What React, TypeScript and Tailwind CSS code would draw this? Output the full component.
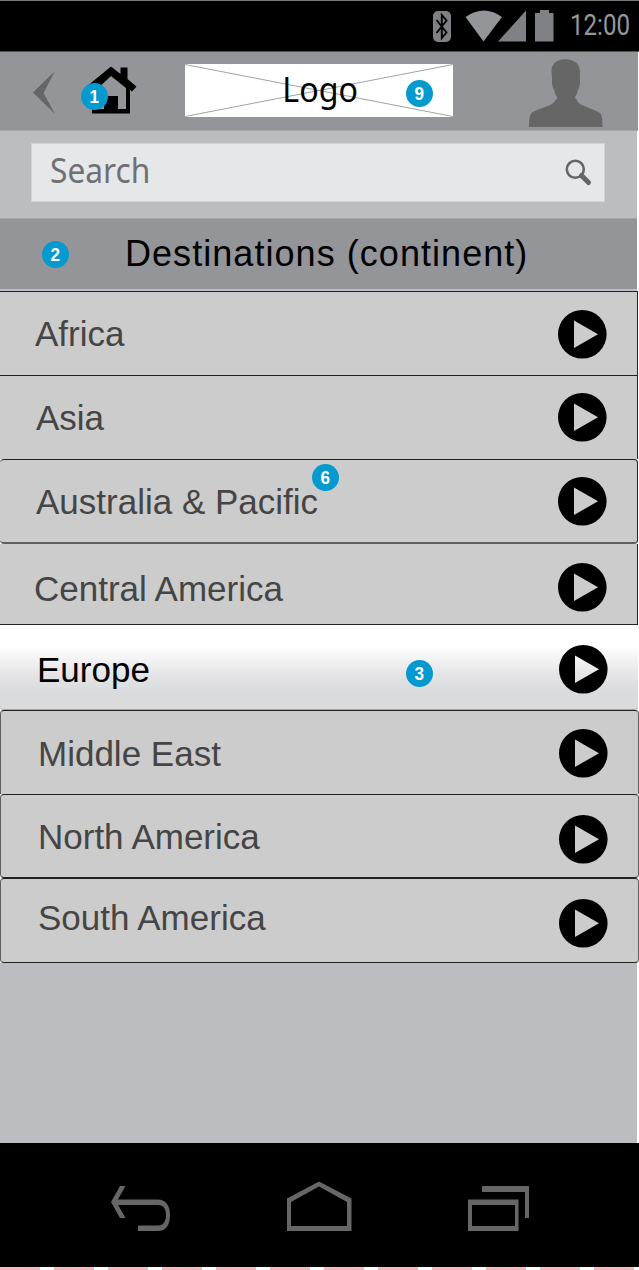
import React from "react";

type Row = {
  name: string;
  frame: string;
  label: string;
  arrow: string;
  badge?: { value: string; place: string };
};

const rows: Row[] = [
  { name: "Africa", frame: "h-[84px] w-[638px] border-t border-r bg-[#cccccc]", label: "mt-[24px] ml-[35px] text-[#454545]", arrow: "mt-[18px] ml-[558px]" },
  { name: "Asia", frame: "h-[84px] w-[638px] border-t border-r bg-[#cccccc]", label: "mt-[24px] ml-[36px] text-[#454545]", arrow: "mt-[17px] ml-[558px]" },
  { name: "Australia & Pacific", frame: "h-[85px] w-[638px] rounded-[4px] border-t border-r border-b-2 border-b-[#606060] bg-[#cccccc]", label: "mt-[24px] ml-[36px] text-[#454545]", arrow: "mt-[17px] ml-[558px]", badge: { value: "6", place: "left-[312px] top-[4px]" } },
  { name: "Central America", frame: "h-[81px] w-[638px] border-r border-b bg-[#cccccc]", label: "mt-[27px] ml-[34px] text-[#454545]", arrow: "mt-[19px] ml-[558px]" },
  { name: "Europe", frame: "h-[85px] w-[638px] rounded-[4px] border-b border-b-[#a0a0a0] bg-linear-to-b from-white from-25% via-[#e4e4e6] via-60% to-[#dadbdd] to-80%", label: "mt-[27px] ml-[37px] text-black", arrow: "mt-[20px] ml-[559px]", badge: { value: "3", place: "left-[406px] top-[35px]" } },
  { name: "Middle East", frame: "h-[84px] w-[639px] rounded-t-[4px] border-x border-t border-x-[#606060] bg-[#cccccc]", label: "mt-[25px] ml-[37px] text-[#454545]", arrow: "mt-[18px] ml-[558px]" },
  { name: "North America", frame: "h-[84px] w-[639px] rounded-[4px] border border-x-[#606060] bg-[#cccccc]", label: "mt-[24px] ml-[37px] text-[#454545]", arrow: "mt-[20px] ml-[558px]" },
  { name: "South America", frame: "h-[85px] w-[639px] rounded-[4px] border border-x-[#606060] bg-[#cccccc]", label: "mt-[21px] ml-[37px] text-[#454545]", arrow: "mt-[20px] ml-[558px]" },
];

function Badge({ value, place }: { value: string; place: string }) {
  return (
    <span className={`absolute z-10 flex size-[27px] items-center justify-center rounded-full bg-[#0499cf] font-['Liberation_Sans',sans-serif] text-[19px] leading-none font-bold text-white ${place}`}>
      <span className="scale-x-90">{value}</span>
    </span>
  );
}

function StatusBar() {
  return (
    <div className="flex h-[52px] border-t border-b border-t-[#777777] border-b-[#505050] bg-black">
      <svg className="ml-[432px] h-[50px] w-[124px] shrink-0" viewBox="432 1 124 50">
        <rect x="433" y="11" width="18" height="31" rx="5" fill="#808184" />
        <path d="M436.500 20 L446.500 32.500 L441.800 38 V15 L446.500 20.500 L436.500 33" fill="none" stroke="#000" strokeWidth="1.900" />
        <path d="M465.500 17 Q484 4 502 17 L483.500 41.500 Z" fill="#939598" />
        <path d="M498 41.500 L526 10.500 V41.500 Z" fill="#808184" />
        <path d="M535 13 H540 V10 H549 V13 H553.500 V41.500 H535 Z" fill="#808184" />
      </svg>
      <span className="mt-[7px] ml-[14px] w-[60px] origin-left scale-x-[0.83] font-['Roboto',sans-serif] text-[29px] leading-[34px] font-normal whitespace-nowrap text-[#97989b]">12:00</span>
    </div>
  );
}

function Header() {
  return (
    <header className="relative flex h-[79px] w-[638px] items-start border-b border-[#a5a6a9] bg-[#939598]">
      <svg className="mt-[19px] ml-[32px] h-[44px] w-[24px] shrink-0" viewBox="32 71 24 44">
        <path d="M55 71 L33 92.500 L55 114 L43.500 93 Z" fill="#666" />
      </svg>
      <svg className="mt-[14px] ml-[27px] h-[48px] w-[55px] shrink-0" viewBox="83 66 55 48">
        <path d="M92 89 L111 74 L130 89 V113.500 H92 Z" fill="#000" />
        <path d="M95 91 L111 76 L126 88 V109 H118 V96 H104 V109 H95 Z" fill="#939598" />
        <path d="M86 87 L111 66.500 L120.500 74 V67.500 H127.500 V79 L136.500 86.500 L132 91.500 L111 75 L90 91 Z" fill="#000" />
      </svg>
      <Badge value="1" place="left-[81px] top-[31px]" />
      <div className="relative mt-[12px] ml-[47px] flex h-[53px] w-[268px] shrink-0 justify-center bg-white">
        <svg className="absolute inset-0 h-full w-full" viewBox="0 0 268 53">
          <path d="M0 0.500 L268 52.500 M0 52.500 L268 0.500" stroke="#8a8a8a" strokeWidth="0.8" />
        </svg>
        <span className="relative mt-px ml-[2px] scale-x-[0.92] font-['Noto_Sans',sans-serif] text-[35px] leading-[47px] text-black">Logo</span>
        <Badge value="9" place="left-[221px] top-[16px]" />
      </div>
      <svg className="mt-[6px] ml-[75px] h-[70px] w-[76px] shrink-0" viewBox="528 58 76 70">
        <path d="M529 127 C529 120 529.500 115 532 112.500 C539 109 547 106.500 552 104 C555 102 555.500 99 557.500 98 C555.500 95 554.500 92 554.200 90 C552 87 551.500 82 552.200 78 C551 71 551 66 555 62.500 C560 58 571 58 576 62.500 C580 66 580.500 70 579.800 78 C580.500 83 580 87 577.800 90 C577.500 93 576 95 574.800 98 C577 99 577 102 580 104 C585 106.500 594 109.500 600 113 C602 115 602.500 120 602.500 127 Z" fill="#666" />
      </svg>
    </header>
  );
}

export default function App() {
  return (
    <main className="flex h-[1270px] w-[639px] flex-col overflow-hidden bg-white">
      <StatusBar />
      <Header />
      <section className="flex h-[87px] w-[637px] items-start bg-[#bcbdc0]">
        <div className="mt-[12px] ml-[31px] flex h-[59px] w-[574px] border border-[#d2d3d5] bg-[#e6e7e9]">
          <span className="ml-[18px] w-[520px] origin-left scale-x-[0.905] font-['Noto_Sans',sans-serif] text-[35px] leading-[52px] text-[#6f7073]">Search</span>
          <svg className="mt-[14px] -ml-[6px] size-[29px] shrink-0" viewBox="564 158 29 29">
            <circle cx="575.300" cy="169.300" r="8.500" fill="none" stroke="#666" strokeWidth="2.600" />
            <path d="M581.500 175.500 L588.500 182.500" stroke="#666" strokeWidth="5" strokeLinecap="round" />
          </svg>
        </div>
      </section>
      <section className="relative h-[73px] w-[637px] border-t border-b-2 border-t-[#a5a6a9] border-b-[#bcbdc0] bg-[#939598]">
        <Badge value="2" place="left-[42px] top-[22px]" />
        <h1 className="mt-[17px] ml-[125px] font-['Liberation_Sans',sans-serif] text-[36px] leading-[36px] tracking-[1.05px] whitespace-nowrap text-black">Destinations (continent)</h1>
      </section>
      <ul className="flex flex-col">
        {rows.map((row) => (
          <li key={row.name} className={`relative grid shrink-0 items-start border-[#222222] ${row.frame}`}>
            <span className={`col-start-1 row-start-1 font-['Liberation_Sans',sans-serif] text-[35px] leading-[36px] whitespace-nowrap ${row.label}`}>{row.name}</span>
            <svg className={`col-start-1 row-start-1 size-[49px] ${row.arrow}`} viewBox="0 0 49 49">
              <path fillRule="evenodd" d="M24.300 0 A24.300 24.300 0 0 1 24.300 48.600 A24.300 24.300 0 0 1 24.300 0 Z M16 10.500 V38 L40 24.300 Z" fill="#000" />
            </svg>
            {row.badge && <Badge value={row.badge.value} place={row.badge.place} />}
          </li>
        ))}
      </ul>
      <div className="w-[637px] flex-1 bg-[#bcbdc0]" />
      <nav className="flex h-[124px] shrink-0 bg-black">
        <svg className="mt-[38px] ml-[110px] h-[52px] w-[62px]" viewBox="110 1181 62 52">
          <path fillRule="evenodd" d="M113 1199.500 H158 C166 1199.500 170 1206 170 1215 C170 1225 166 1231 158 1231 H138 V1225.500 H158 C163.500 1225.500 166 1221 166 1215 C166 1209 163.500 1205 158 1205 H113 Z" fill="#666" />
          <path d="M120 1186 H125.500 L116.500 1202 L125.500 1218 H120 L111 1202 Z" fill="#666" />
        </svg>
        <svg className="mt-[38px] ml-[113px] h-[52px] w-[68px]" viewBox="285 1181 68 52">
          <path fillRule="evenodd" d="M287 1231 V1198.500 L319 1181.500 L351.500 1198.500 V1231 Z M291 1226 H347 V1202 L319 1186.500 L291 1202 Z" fill="#666" />
        </svg>
        <svg className="mt-[38px] ml-[114px] h-[52px] w-[64px]" viewBox="467 1181 64 52">
          <path fillRule="evenodd" d="M468 1199.500 H518.500 V1231 H468 Z M472 1205 V1226 H515 V1205 Z" fill="#666" />
          <path d="M482 1186 H529 V1218 H525 V1192 H482 Z" fill="#666" />
        </svg>
      </nav>
      <div className="h-[3px] shrink-0 bg-[repeating-linear-gradient(90deg,#fbb9b9_0px,#fbb9b9_40px,#ffffff_40px,#ffffff_54px)]" />
    </main>
  );
}
